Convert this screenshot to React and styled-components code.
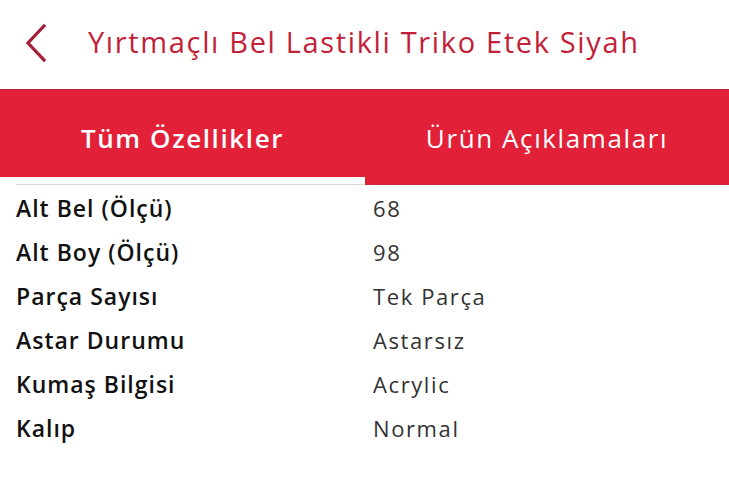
import React, { useState } from 'react';
import styled, { createGlobalStyle } from 'styled-components';

const GlobalStyle = createGlobalStyle`
  html, body {
    margin: 0;
    padding: 0;
    background: #fff;
  }
  body {
    font-family: 'Open Sans', 'Noto Sans', sans-serif;
  }
`;

const specs = [
  { label: 'Alt Bel (Ölçü)', value: '68' },
  { label: 'Alt Boy (Ölçü)', value: '98' },
  { label: 'Parça Sayısı', value: 'Tek Parça' },
  { label: 'Astar Durumu', value: 'Astarsız' },
  { label: 'Kumaş Bilgisi', value: 'Acrylic' },
  { label: 'Kalıp', value: 'Normal' },
];

const App = () => {
  const [active, setActive] = useState(0);
  const tabs = ['Tüm Özellikler', 'Ürün Açıklamaları'];

  return (
    <Page>
      <GlobalStyle />
      <Header>
        <BackButton type="button" aria-label="geri">
          <svg width="24" height="40" viewBox="0 0 24 40" fill="none">
            <path
              d="M20 3 L4 20 L20 37"
              stroke="#a51d36"
              strokeWidth="3.2"
              strokeLinecap="square"
            />
          </svg>
        </BackButton>
        <Title>Yırtmaçlı Bel Lastikli Triko Etek Siyah</Title>
      </Header>
      <Tabs>
        {tabs.map((t, i) => (
          <Tab
            key={t}
            type="button"
            $active={active === i}
            onClick={() => setActive(i)}
          >
            {t}
          </Tab>
        ))}
      </Tabs>
      <SpecList>
        {specs.map((s) => (
          <SpecRow key={s.label}>
            <Label>{s.label}</Label>
            <Value>{s.value}</Value>
          </SpecRow>
        ))}
      </SpecList>
    </Page>
  );
};

const Page = styled.div`
  width: 729px;
  min-height: 490px;
  background: #fff;
`;

const Header = styled.header`
  height: 90px;
  display: flex;
  align-items: center;
  padding: 0 0 0 24px;
  box-sizing: border-box;
  border-bottom: 1px solid #b51f39;
`;

const BackButton = styled.button`
  background: none;
  border: 0;
  padding: 0;
  width: 24px;
  height: 40px;
  display: flex;
  cursor: pointer;
  margin-right: 40px;
  margin-top: -4px;
`;

const Title = styled.h1`
  margin: 0;
  font-size: 29px;
  font-weight: 500;
  color: #c21f3a;
  letter-spacing: 1.65px;
  white-space: nowrap;
  margin-top: -6px;
`;

const Tabs = styled.nav`
  display: flex;
  background: #e22139;
  height: 94px;
  border-bottom: 1px solid #c9303f;
`;

const Tab = styled.button`
  flex: ${(p) => (p.$active ? '0 0 365px' : '1 1 auto')};
  background: none;
  border: 0;
  padding: 2px 0 0;
  font-family: inherit;
  font-size: 26px;
  letter-spacing: 1.6px;
  color: #fff;
  font-weight: ${(p) => (p.$active ? 600 : 400)};
  cursor: pointer;
  position: relative;

  &::after {
    content: '';
    display: ${(p) => (p.$active ? 'block' : 'none')};
    position: absolute;
    left: 16px;
    right: 0;
    bottom: -1px;
    height: 7px;
    background: #fff;
    border-bottom: 1px solid #d4d9d8;
    box-shadow: -16px 0 0 #fff;
  }
`;

const SpecList = styled.dl`
  margin: 0;
  padding: 1px 16px 0;
`;

const SpecRow = styled.div`
  display: grid;
  grid-template-columns: 357px 1fr;
  height: 44px;
  align-items: center;
`;

const Label = styled.dt`
  font-size: 23px;
  font-weight: 600;
  letter-spacing: 1px;
  color: #111;
`;

const Value = styled.dd`
  margin: 0;
  font-size: 22px;
  letter-spacing: 1.6px;
  color: #333;
`;

export default App;
